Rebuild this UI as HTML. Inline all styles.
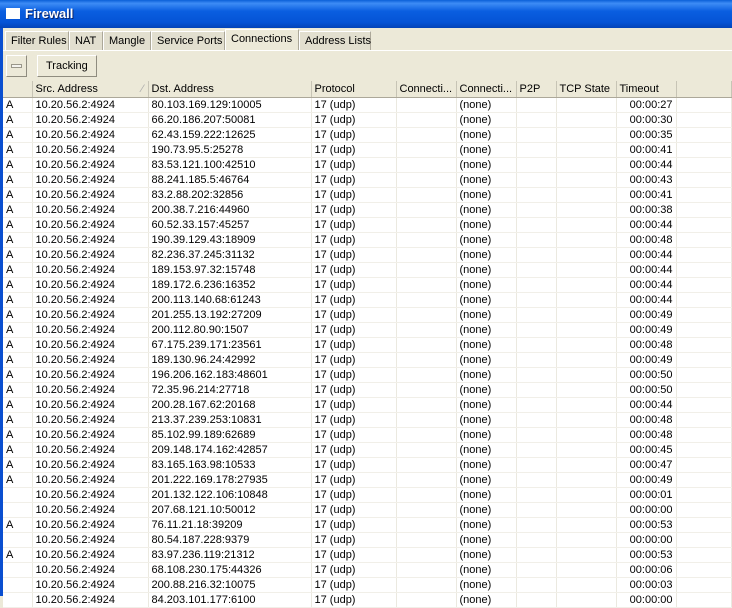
<!DOCTYPE html>
<html><head><meta charset="utf-8"><style>
*{margin:0;padding:0;box-sizing:border-box}
body{width:732px;height:596px;overflow:hidden;background:#ece9d8;font-family:"Liberation Sans",Tahoma,sans-serif;font-size:11px;color:#000;position:relative}
.title{position:absolute;left:0;top:0;width:732px;height:28px;background:linear-gradient(#0a5fd8 0%,#3d8cf5 12%,#0a5ee0 40%,#0553d6 80%,#0343b8 100%);color:#fff;font-weight:bold;font-size:13px}
.title .ic{position:absolute;left:6px;top:8px;width:14px;height:11px;background:#fff;border-top:2px solid #fff}
.title span{position:absolute;left:25px;top:6px;text-shadow:1px 1px #0a246a}
.lb{position:absolute;left:0;top:28px;width:3px;height:568px;background:#0a4fd0}
.tabs{position:absolute;left:3px;top:29px;height:22px;width:729px}
.tab{position:absolute;top:2px;height:19px;border:1px solid #fff;border-right-color:#aca899;border-bottom:none;background:#e2dfcf;padding:3px 5px 0;white-space:nowrap}
.tab.act{top:0;height:22px;background:#ece9d8;padding-top:3px}
.tline{position:absolute;left:3px;top:50px;width:729px;height:1px;background:#fff}
.btn{position:absolute;top:55px;height:22px;border:1px solid #fff;border-right-color:#8f8c7f;border-bottom-color:#8f8c7f;background:#ece9d8}
table{position:absolute;left:3px;top:81px;border-collapse:collapse;table-layout:fixed;background:#fff;width:729px}
td,th{height:14px;line-height:14px;padding:0 0 0 3px;white-space:nowrap;overflow:hidden;font-weight:normal;text-align:left;border-right:1px solid #ebe9e0;border-bottom:1px solid #f1efe8}
th{height:16px;line-height:16px;background:#ece9d8;border-right:1px solid #c7c4b5;border-bottom:1px solid #aca899}
td.r{text-align:right;padding-right:3px}
</style></head><body>
<div class="title"><div class="ic"></div><span>Firewall</span></div>
<div class="lb"></div>
<div class="tabs">
<div class="tab" style="left:2px;width:64px">Filter Rules</div>
<div class="tab" style="left:66px;width:34px">NAT</div>
<div class="tab" style="left:100px;width:48px">Mangle</div>
<div class="tab" style="left:148px;width:74px">Service Ports</div>
<div class="tab act" style="left:222px;width:74px">Connections</div>
<div class="tab" style="left:296px;width:72px">Address Lists</div>
</div>
<div class="tline"></div>
<div class="btn" style="left:6px;width:21px"><div style="position:absolute;left:4px;top:8px;width:11px;height:4px;border:1px solid #9a978a;background:#f4f3ee"></div></div>
<div class="btn" style="left:37px;width:60px;padding:4px 0 0 8px">Tracking</div>
<table>
<colgroup><col style="width:29px"><col style="width:116px"><col style="width:163px"><col style="width:85px"><col style="width:60px"><col style="width:60px"><col style="width:40px"><col style="width:60px"><col style="width:60px"><col></colgroup>
<tr><th></th><th>Src. Address<span style="float:right;color:#aaa;padding-right:4px">⁄</span></th><th>Dst. Address</th><th>Protocol</th><th>Connecti...</th><th>Connecti...</th><th>P2P</th><th>TCP State</th><th>Timeout</th><th></th></tr>
<tr><td>A</td><td>10.20.56.2:4924</td><td>80.103.169.129:10005</td><td>17 (udp)</td><td></td><td>(none)</td><td></td><td></td><td class="r">00:00:27</td><td></td></tr>
<tr><td>A</td><td>10.20.56.2:4924</td><td>66.20.186.207:50081</td><td>17 (udp)</td><td></td><td>(none)</td><td></td><td></td><td class="r">00:00:30</td><td></td></tr>
<tr><td>A</td><td>10.20.56.2:4924</td><td>62.43.159.222:12625</td><td>17 (udp)</td><td></td><td>(none)</td><td></td><td></td><td class="r">00:00:35</td><td></td></tr>
<tr><td>A</td><td>10.20.56.2:4924</td><td>190.73.95.5:25278</td><td>17 (udp)</td><td></td><td>(none)</td><td></td><td></td><td class="r">00:00:41</td><td></td></tr>
<tr><td>A</td><td>10.20.56.2:4924</td><td>83.53.121.100:42510</td><td>17 (udp)</td><td></td><td>(none)</td><td></td><td></td><td class="r">00:00:44</td><td></td></tr>
<tr><td>A</td><td>10.20.56.2:4924</td><td>88.241.185.5:46764</td><td>17 (udp)</td><td></td><td>(none)</td><td></td><td></td><td class="r">00:00:43</td><td></td></tr>
<tr><td>A</td><td>10.20.56.2:4924</td><td>83.2.88.202:32856</td><td>17 (udp)</td><td></td><td>(none)</td><td></td><td></td><td class="r">00:00:41</td><td></td></tr>
<tr><td>A</td><td>10.20.56.2:4924</td><td>200.38.7.216:44960</td><td>17 (udp)</td><td></td><td>(none)</td><td></td><td></td><td class="r">00:00:38</td><td></td></tr>
<tr><td>A</td><td>10.20.56.2:4924</td><td>60.52.33.157:45257</td><td>17 (udp)</td><td></td><td>(none)</td><td></td><td></td><td class="r">00:00:44</td><td></td></tr>
<tr><td>A</td><td>10.20.56.2:4924</td><td>190.39.129.43:18909</td><td>17 (udp)</td><td></td><td>(none)</td><td></td><td></td><td class="r">00:00:48</td><td></td></tr>
<tr><td>A</td><td>10.20.56.2:4924</td><td>82.236.37.245:31132</td><td>17 (udp)</td><td></td><td>(none)</td><td></td><td></td><td class="r">00:00:44</td><td></td></tr>
<tr><td>A</td><td>10.20.56.2:4924</td><td>189.153.97.32:15748</td><td>17 (udp)</td><td></td><td>(none)</td><td></td><td></td><td class="r">00:00:44</td><td></td></tr>
<tr><td>A</td><td>10.20.56.2:4924</td><td>189.172.6.236:16352</td><td>17 (udp)</td><td></td><td>(none)</td><td></td><td></td><td class="r">00:00:44</td><td></td></tr>
<tr><td>A</td><td>10.20.56.2:4924</td><td>200.113.140.68:61243</td><td>17 (udp)</td><td></td><td>(none)</td><td></td><td></td><td class="r">00:00:44</td><td></td></tr>
<tr><td>A</td><td>10.20.56.2:4924</td><td>201.255.13.192:27209</td><td>17 (udp)</td><td></td><td>(none)</td><td></td><td></td><td class="r">00:00:49</td><td></td></tr>
<tr><td>A</td><td>10.20.56.2:4924</td><td>200.112.80.90:1507</td><td>17 (udp)</td><td></td><td>(none)</td><td></td><td></td><td class="r">00:00:49</td><td></td></tr>
<tr><td>A</td><td>10.20.56.2:4924</td><td>67.175.239.171:23561</td><td>17 (udp)</td><td></td><td>(none)</td><td></td><td></td><td class="r">00:00:48</td><td></td></tr>
<tr><td>A</td><td>10.20.56.2:4924</td><td>189.130.96.24:42992</td><td>17 (udp)</td><td></td><td>(none)</td><td></td><td></td><td class="r">00:00:49</td><td></td></tr>
<tr><td>A</td><td>10.20.56.2:4924</td><td>196.206.162.183:48601</td><td>17 (udp)</td><td></td><td>(none)</td><td></td><td></td><td class="r">00:00:50</td><td></td></tr>
<tr><td>A</td><td>10.20.56.2:4924</td><td>72.35.96.214:27718</td><td>17 (udp)</td><td></td><td>(none)</td><td></td><td></td><td class="r">00:00:50</td><td></td></tr>
<tr><td>A</td><td>10.20.56.2:4924</td><td>200.28.167.62:20168</td><td>17 (udp)</td><td></td><td>(none)</td><td></td><td></td><td class="r">00:00:44</td><td></td></tr>
<tr><td>A</td><td>10.20.56.2:4924</td><td>213.37.239.253:10831</td><td>17 (udp)</td><td></td><td>(none)</td><td></td><td></td><td class="r">00:00:48</td><td></td></tr>
<tr><td>A</td><td>10.20.56.2:4924</td><td>85.102.99.189:62689</td><td>17 (udp)</td><td></td><td>(none)</td><td></td><td></td><td class="r">00:00:48</td><td></td></tr>
<tr><td>A</td><td>10.20.56.2:4924</td><td>209.148.174.162:42857</td><td>17 (udp)</td><td></td><td>(none)</td><td></td><td></td><td class="r">00:00:45</td><td></td></tr>
<tr><td>A</td><td>10.20.56.2:4924</td><td>83.165.163.98:10533</td><td>17 (udp)</td><td></td><td>(none)</td><td></td><td></td><td class="r">00:00:47</td><td></td></tr>
<tr><td>A</td><td>10.20.56.2:4924</td><td>201.222.169.178:27935</td><td>17 (udp)</td><td></td><td>(none)</td><td></td><td></td><td class="r">00:00:49</td><td></td></tr>
<tr><td></td><td>10.20.56.2:4924</td><td>201.132.122.106:10848</td><td>17 (udp)</td><td></td><td>(none)</td><td></td><td></td><td class="r">00:00:01</td><td></td></tr>
<tr><td></td><td>10.20.56.2:4924</td><td>207.68.121.10:50012</td><td>17 (udp)</td><td></td><td>(none)</td><td></td><td></td><td class="r">00:00:00</td><td></td></tr>
<tr><td>A</td><td>10.20.56.2:4924</td><td>76.11.21.18:39209</td><td>17 (udp)</td><td></td><td>(none)</td><td></td><td></td><td class="r">00:00:53</td><td></td></tr>
<tr><td></td><td>10.20.56.2:4924</td><td>80.54.187.228:9379</td><td>17 (udp)</td><td></td><td>(none)</td><td></td><td></td><td class="r">00:00:00</td><td></td></tr>
<tr><td>A</td><td>10.20.56.2:4924</td><td>83.97.236.119:21312</td><td>17 (udp)</td><td></td><td>(none)</td><td></td><td></td><td class="r">00:00:53</td><td></td></tr>
<tr><td></td><td>10.20.56.2:4924</td><td>68.108.230.175:44326</td><td>17 (udp)</td><td></td><td>(none)</td><td></td><td></td><td class="r">00:00:06</td><td></td></tr>
<tr><td></td><td>10.20.56.2:4924</td><td>200.88.216.32:10075</td><td>17 (udp)</td><td></td><td>(none)</td><td></td><td></td><td class="r">00:00:03</td><td></td></tr>
<tr><td></td><td>10.20.56.2:4924</td><td>84.203.101.177:6100</td><td>17 (udp)</td><td></td><td>(none)</td><td></td><td></td><td class="r">00:00:00</td><td></td></tr>
</table>
</body></html>
